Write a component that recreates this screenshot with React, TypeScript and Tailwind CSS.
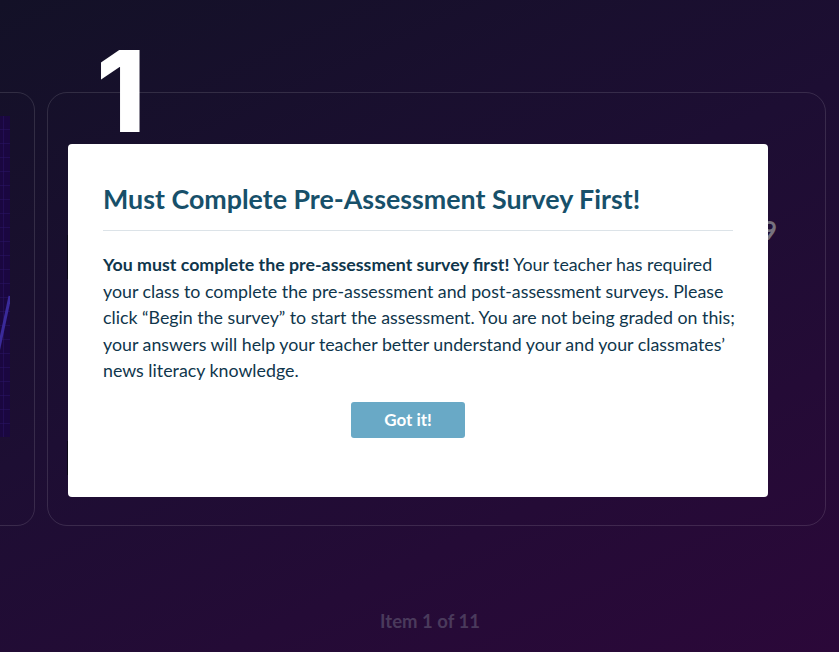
import React from "react";

export default function App() {
  return (
    <div
      className="relative w-[839px] h-[652px] overflow-hidden bg-[linear-gradient(155deg,#131127_0%,#1d0e33_45%,#2b0839_100%)]"
      style={{ fontFamily: "Lato, 'Open Sans', sans-serif" }}
    >
      <div className="flex flex-col h-full">
        <div className="flex gap-[12px] ml-[-744px] mt-[92px]">
          {/* previous card */}
          <div className="shrink-0 w-[779px] h-[434px] rounded-[18px] border border-[#ffffff1f] flex justify-end pt-[23px] pr-[24px]">
            <div className="w-[300px] h-[321px] bg-[#1a0740] overflow-hidden">
              <svg width="300" height="321" className="block">
                <defs>
                  <pattern id="g" width="14" height="14" patternUnits="userSpaceOnUse">
                    <path d="M14 0V14M0 14H14" stroke="#2a1366" strokeWidth="1" fill="none" />
                  </pattern>
                </defs>
                <rect width="300" height="321" fill="url(#g)" />
                <path d="M270 321 L300 180" stroke="#3a2a9a" strokeWidth="3" />
              </svg>
            </div>
          </div>
          {/* current card */}
          <div className="relative shrink-0 w-[779px] h-[434px] rounded-[20px] border border-[#ffffff1f] flex pl-[19px] pr-[48px] pt-[124px]">
            <div
              className="absolute left-[48px] top-[-58px] text-white font-extrabold text-[113px] leading-none"
              style={{ fontFamily: "Inter, sans-serif" }}
            >
              1
            </div>
            <div className="flex flex-col">
              <div className="mt-[18px] w-[2px] h-[44px] bg-[#0c0818]" />
              <div className="mt-[162px] w-[2px] h-[34px] bg-[#0c0818]" />
            </div>
            <div className="ml-auto text-[26px] font-bold text-[#77737f] leading-none">2019</div>
          </div>
        </div>
        <div className="mt-auto mb-[16px] pl-[21px] text-center text-[18.5px] font-bold text-[#4a3a5c]">
          Item 1 of 11
        </div>
      </div>

      {/* modal */}
      <div className="absolute left-[68px] top-[144px] w-[700px] h-[353px] bg-white rounded-[4px] pl-[35px] pr-[35px] pt-[38px]">
        <h2 className="text-[26.8px] font-bold text-[#17506a] leading-[34px] pb-[14px] border-b border-[#dce3e8]">
          Must Complete Pre-Assessment Survey First!
        </h2>
        <p className="mt-[20px] mr-[-6px] text-[17.8px] leading-[26.5px] text-[#0f364c]">
          <strong className="font-bold">You must complete the pre-assessment survey first!</strong> Your teacher has
          required your class to complete the pre-assessment and post-assessment surveys. Please click “Begin the
          survey” to start the assessment. You are not being graded on this; your answers will help your teacher
          better understand your and your classmates’ news literacy knowledge.
        </p>
        <div className="flex justify-center mt-[18px] pr-[20px]">
          <button className="w-[114px] h-[36px] rounded-[3px] bg-[#69a9c6] text-white font-bold text-[17px]">
            Got it!
          </button>
        </div>
      </div>
    </div>
  );
}
